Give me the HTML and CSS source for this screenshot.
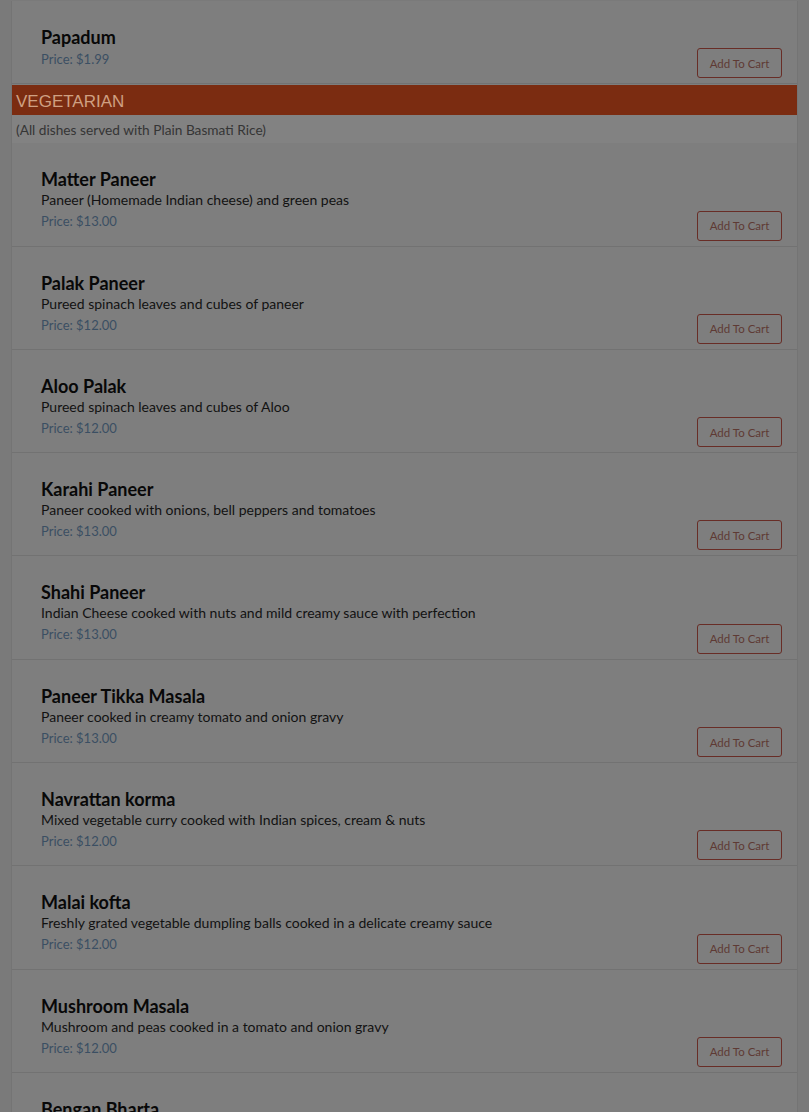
FILE: index.html
```html
<!DOCTYPE html>
<html>
<head>
<meta charset="utf-8">
<link rel="stylesheet" href="styles.css">
</head>
<body>
<div class="menu">
  <div class="item">
    <div class="info">
      <div class="name">Papadum</div>
      <div class="price">Price: $1.99</div>
    </div>
    <button class="cart">Add To Cart</button>
  </div>
  <div class="cat">VEGETARIAN</div>
  <div class="note">(All dishes served with Plain Basmati Rice)</div>
  <div class="item">
    <div class="info">
      <div class="name">Matter Paneer</div>
      <div class="desc">Paneer (Homemade Indian cheese) and green peas</div>
      <div class="price">Price: $13.00</div>
    </div>
    <button class="cart">Add To Cart</button>
  </div>
  <div class="item">
    <div class="info">
      <div class="name">Palak Paneer</div>
      <div class="desc">Pureed spinach leaves and cubes of paneer</div>
      <div class="price">Price: $12.00</div>
    </div>
    <button class="cart">Add To Cart</button>
  </div>
  <div class="item">
    <div class="info">
      <div class="name">Aloo Palak</div>
      <div class="desc">Pureed spinach leaves and cubes of Aloo</div>
      <div class="price">Price: $12.00</div>
    </div>
    <button class="cart">Add To Cart</button>
  </div>
  <div class="item">
    <div class="info">
      <div class="name">Karahi Paneer</div>
      <div class="desc">Paneer cooked with onions, bell peppers and tomatoes</div>
      <div class="price">Price: $13.00</div>
    </div>
    <button class="cart">Add To Cart</button>
  </div>
  <div class="item">
    <div class="info">
      <div class="name">Shahi Paneer</div>
      <div class="desc">Indian Cheese cooked with nuts and mild creamy sauce with perfection</div>
      <div class="price">Price: $13.00</div>
    </div>
    <button class="cart">Add To Cart</button>
  </div>
  <div class="item">
    <div class="info">
      <div class="name">Paneer Tikka Masala</div>
      <div class="desc">Paneer cooked in creamy tomato and onion gravy</div>
      <div class="price">Price: $13.00</div>
    </div>
    <button class="cart">Add To Cart</button>
  </div>
  <div class="item">
    <div class="info">
      <div class="name">Navrattan korma</div>
      <div class="desc">Mixed vegetable curry cooked with Indian spices, cream &amp; nuts</div>
      <div class="price">Price: $12.00</div>
    </div>
    <button class="cart">Add To Cart</button>
  </div>
  <div class="item">
    <div class="info">
      <div class="name">Malai kofta</div>
      <div class="desc">Freshly grated vegetable dumpling balls cooked in a delicate creamy sauce</div>
      <div class="price">Price: $12.00</div>
    </div>
    <button class="cart">Add To Cart</button>
  </div>
  <div class="item">
    <div class="info">
      <div class="name">Mushroom Masala</div>
      <div class="desc">Mushroom and peas cooked in a tomato and onion gravy</div>
      <div class="price">Price: $12.00</div>
    </div>
    <button class="cart">Add To Cart</button>
  </div>
  <div class="item">
    <div class="info">
      <div class="name">Bengan Bharta</div>
      <div class="desc">Roasted eggplant cooked with onions and tomatoes</div>
      <div class="price">Price: $12.00</div>
    </div>
    <button class="cart">Add To Cart</button>
  </div>
</div>
</body>
</html>
```
FILE: styles.css
```css
html, body {
  margin: 0;
  padding: 0;
  background: #7a7a7a;
  overflow: hidden;
}
body {
  font-family: Lato, "Liberation Sans", sans-serif;
  color: #0e0e0e;
}
.menu {
  margin: 1px 11px 0;
  background: #7e7e7e;
  border-left: 1px solid #747474;
  border-right: 1px solid #747474;
}
.item {
  display: flex;
  justify-content: space-between;
  align-items: flex-end;
  padding: 25px 15px 4px 29px;
  border-bottom: 1px solid #727272;
}
.info {
  padding-bottom: 9px;
}
.name {
  font-size: 18px;
  font-weight: 700;
  line-height: 22px;
  color: #080808;
}
.desc {
  font-size: 14px;
  line-height: 20px;
  color: #121212;
}
.price {
  padding-top: 1px;
  font-size: 13px;
  line-height: 21.3px;
  color: #3b4f63;
}
.cart {
  width: 85px;
  height: 30px;
  margin-bottom: 1px;
  padding: 0;
  background: transparent;
  border: 1px solid #682d26;
  border-radius: 3px;
  font-family: Lato, "Liberation Sans", sans-serif;
  font-size: 11.5px;
  color: #5e3a34;
}
.cat {
  height: 30px;
  box-sizing: border-box;
  margin-top: 1px;
  padding: 4px 4px 0;
  line-height: 26px;
  background: #7b2c11;
  color: #cfa082;
  font-family: "Liberation Sans", Arial, sans-serif;
  font-size: 17px;
}
.note {
  padding: 5px 4px 3px;
  line-height: 20px;
  font-size: 13.7px;
  color: #353535;
  background: #828282;
}
```
